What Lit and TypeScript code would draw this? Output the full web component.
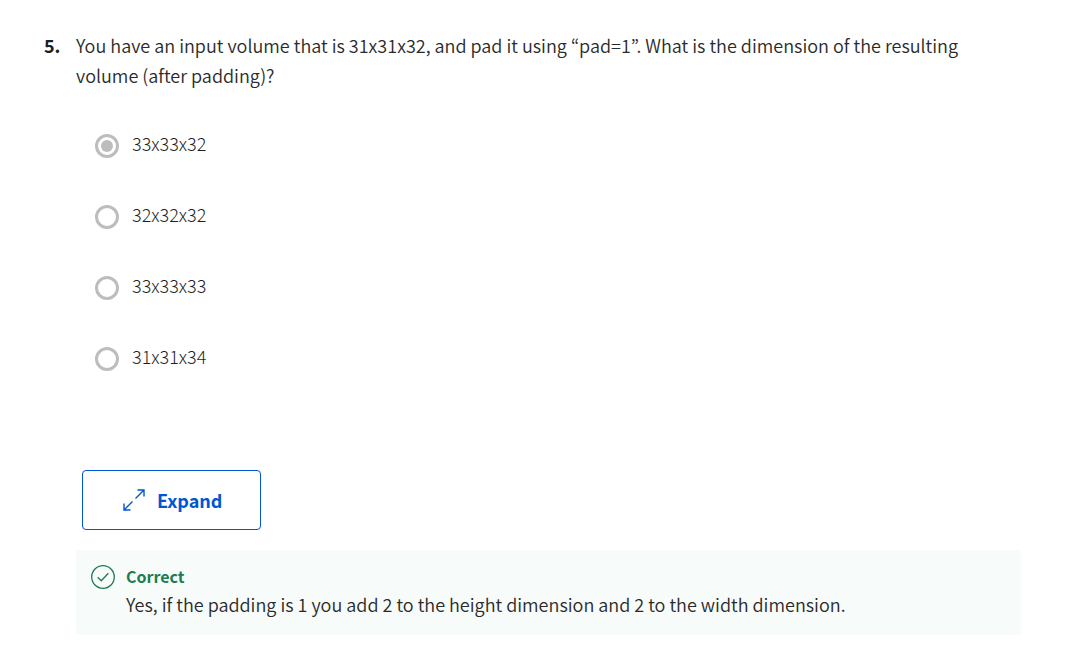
import { LitElement, html, css } from "lit";
import { customElement, state } from "lit/decorators.js";

@customElement("app-root")
export class AppRoot extends LitElement {
  static styles = css`
    :host {
      display: block;
      box-sizing: border-box;
      padding: 30px 49px 22px 44px;
      background: #fff;
      color: #2a2a2a;
      font-family: "Noto Sans CJK KR", "Noto Sans", sans-serif;
      font-size: 18px;
      font-weight: 350;
      line-height: 30px;
    }
    * {
      box-sizing: border-box;
    }
    .question {
      display: grid;
      grid-template-columns: 32px 1fr;
    }
    .number {
      color: #1f1f1f;
      font-weight: 700;
    }
    .prompt {
      margin: 0;
      padding-right: 32px;
    }
    .options {
      display: grid;
      gap: 41px;
      margin: 38px 0 0;
      padding: 0 0 0 19px;
      border: 0;
      color: #1f1f1f;
      font-weight: 300;
    }
    .option {
      display: flex;
      align-items: center;
      gap: 13px;
    }
    .radio {
      appearance: none;
      flex: none;
      display: grid;
      place-items: center;
      width: 24px;
      height: 24px;
      margin: 6px 0 0;
      border: 3px solid #bdbdbd;
      border-radius: 50%;
      background: #fff;
    }
    .radio:checked::before {
      content: "";
      width: 12px;
      height: 12px;
      border-radius: 50%;
      background: #bdbdbd;
    }
    .expand {
      display: flex;
      align-items: center;
      justify-content: center;
      gap: 12px;
      min-height: 60px;
      margin: 99px 0 20px 6px;
      padding: 0 38px 0 40px;
      border: 1px solid #0056d2;
      border-radius: 4px;
      background: #fff;
      color: #0056d2;
      font: inherit;
      font-weight: 700;
      cursor: pointer;
    }
    .icon {
      display: block;
      flex: none;
      fill: none;
      stroke: currentColor;
    }
    .feedback {
      display: grid;
      grid-template-columns: 24px 1fr;
      column-gap: 11px;
      padding: 13px 16px 16px 15px;
      background: #f7fbf9;
    }
    .feedback .icon {
      margin-top: 2px;
      color: #1d7c50;
    }
    .verdict {
      margin: 0;
      color: #1d7c50;
      font-size: 16px;
      font-weight: 700;
      line-height: 26px;
    }
    .explanation {
      margin: 0;
    }
  `;

  @state() private selected = "33x33x32";

  private choices = ["33x33x32", "32x32x32", "33x33x33", "31x31x34"];

  render() {
    return html`
      <main class="question">
        <span class="number">5.</span>
        <div>
          <p class="prompt" id="prompt">
            You have an input volume that is 31x31x32, and pad it using “pad=1”. What is the
            dimension of the resulting volume (after padding)?
          </p>
          <fieldset class="options" aria-labelledby="prompt" disabled>
            ${this.choices.map(
              (choice) => html`
                <label class="option">
                  <input
                    class="radio"
                    type="radio"
                    name="answer"
                    .value=${choice}
                    .checked=${choice === this.selected}
                  />
                  <span>${choice}</span>
                </label>
              `
            )}
          </fieldset>
          <button class="expand" type="button">
            <svg class="icon" width="22" height="22" viewBox="0 0 22 22" stroke-width="1.4" aria-hidden="true">
              <path d="m12.5 9.5 8.5-8.5M14.5 1H21v6.5M9.5 12.5 1 21M1 14.5V21h6.5" />
            </svg>
            Expand
          </button>
          <section class="feedback">
            <svg class="icon" width="24" height="24" viewBox="0 0 24 24" stroke-width="1.3" aria-hidden="true">
              <circle cx="12" cy="12" r="11.3" />
              <path d="m6.7 12.2 3.6 3.6 7-7.6" />
            </svg>
            <div>
              <h3 class="verdict">Correct</h3>
              <p class="explanation">
                Yes, if the padding is 1 you add 2 to the height dimension and 2 to the width dimension.
              </p>
            </div>
          </section>
        </div>
      </main>
    `;
  }
}
